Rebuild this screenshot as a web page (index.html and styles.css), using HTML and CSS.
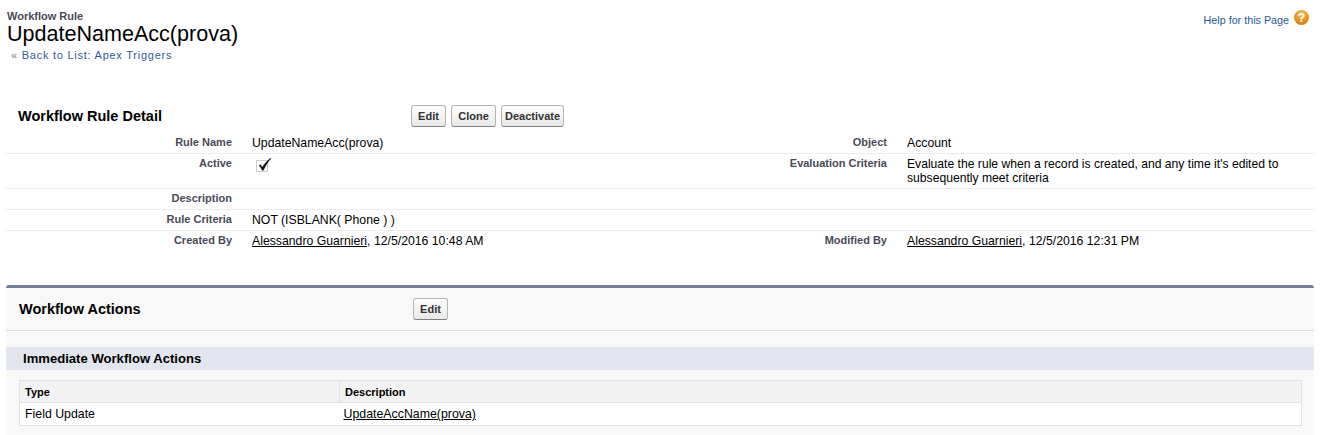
FILE: index.html
```html
<!DOCTYPE html>
<html lang="en">
<head>
<meta charset="utf-8">
<title>Workflow Rule</title>
<link rel="stylesheet" href="styles.css">
</head>
<body>
<header class="page-head">
  <div class="head-left">
    <div class="eyebrow">Workflow Rule</div>
    <h1 class="title">UpdateNameAcc(prova)</h1>
    <div class="back"><span class="back-mark">«</span> <a href="#">Back to List: Apex Triggers</a></div>
  </div>
  <a class="help" href="#">
    <span class="help-text">Help for this Page</span>
    <svg class="help-icon" width="15" height="15" viewBox="0 0 15 15" aria-hidden="true">
      <defs><radialGradient id="hg" cx="50%" cy="30%" r="70%"><stop offset="0" stop-color="#f6c25a"/><stop offset="1" stop-color="#d67c0c"/></radialGradient></defs>
      <circle cx="7.500" cy="7.500" r="7.500" fill="url(#hg)"/>
      <text x="7.500" y="11.500" text-anchor="middle" class="help-q">?</text>
    </svg>
  </a>
</header>

<section class="detail">
  <div class="detail-head">
    <h2 class="detail-title">Workflow Rule Detail</h2>
    <div class="btns">
      <button class="btn">Edit</button>
      <button class="btn">Clone</button>
      <button class="btn">Deactivate</button>
    </div>
  </div>
  <div class="row row-first">
    <div class="lab">Rule Name</div><div class="val">UpdateNameAcc(prova)</div>
    <div class="lab">Object</div><div class="val">Account</div>
  </div>
  <div class="row row-active">
    <div class="lab">Active</div>
    <div class="val"><svg class="check" width="16" height="15" viewBox="0 0 16 15" aria-hidden="true"><rect x="0.5" y="3.500" width="11" height="11" fill="none" stroke="#9a9a9a" stroke-dasharray="1 1"/><path d="M2.800 8.600L4.500 7.500 6.300 10C8.500 6.500 11 3.500 14.500 1L15 1.700C12 5 9.500 9 7.500 13.500H6C5.200 11.500 4.200 10 2.800 8.600z" fill="#111"/></svg></div>
    <div class="lab">Evaluation Criteria</div>
    <div class="val val-eval">Evaluate the rule when a record is created, and any time it's edited to<br>subsequently meet criteria</div>
  </div>
  <div class="row">
    <div class="lab">Description</div><div class="val"></div>
    <div class="lab"></div><div class="val"></div>
  </div>
  <div class="row">
    <div class="lab">Rule Criteria</div><div class="val">NOT (ISBLANK( Phone ) )</div>
    <div class="lab"></div><div class="val"></div>
  </div>
  <div class="row row-last">
    <div class="lab">Created By</div><div class="val"><a href="#">Alessandro Guarnieri</a>, 12/5/2016 10:48 AM</div>
    <div class="lab">Modified By</div><div class="val"><a href="#">Alessandro Guarnieri</a>, 12/5/2016 12:31 PM</div>
  </div>
</section>

<section class="panel">
  <div class="panel-head">
    <h2 class="panel-title">Workflow Actions</h2>
    <button class="btn">Edit</button>
  </div>
  <h3 class="band">Immediate Workflow Actions</h3>
  <div class="list-wrap">
    <table class="list">
      <thead><tr><th class="col-type">Type</th><th>Description</th></tr></thead>
      <tbody><tr><td>Field Update</td><td class="td-link"><a href="#">UpdateAccName(prova)</a></td></tr></tbody>
    </table>
  </div>
</section>
</body>
</html>
```

FILE: styles.css
```css
* { box-sizing: border-box; }
html, body { margin: 0; padding: 0; }
body {
  width: 1322px;
  height: 435px;
  overflow: hidden;
  background: #fff;
  color: #000;
  font-family: "Liberation Sans", Arial, sans-serif;
  font-size: 12.25px;
}
a { color: inherit; }
h1, h2, h3 { margin: 0; }

.page-head {
  display: flex;
  justify-content: space-between;
  align-items: flex-start;
  height: 104px;
  padding: 10px 13px 0 7px;
}
.eyebrow { font-size: 11px; font-weight: bold; line-height: 13px; color: #4a4a56; }
.title { font-size: 21.55px; font-weight: normal; line-height: 22px; color: #000; }
.back { margin: 3px 0 0 4px; font-size: 11px; line-height: 14px; letter-spacing: 0.75px; }
.back a { color: #2f5c94; text-decoration: none; }
.back-mark { color: #5f7ba0; }
.help { display: flex; align-items: flex-start; gap: 5px; font-size: 10.75px; color: #1f5a98; text-decoration: none; }
.help-text { margin-top: 4px; line-height: 12px; }
.help-icon { display: block; }
.help-q { font: bold 12px "Liberation Sans", sans-serif; fill: #fff; }

.detail { margin: 0 7px 0 6px; }
.detail-head { display: flex; align-items: center; height: 23px; margin-bottom: 3px; padding-left: 12px; }
.detail-title { width: 393px; font-size: 14.5px; font-weight: bold; color: #000; }
.btns { display: flex; gap: 5px; }
.btn {
  height: 22px;
  padding: 0 3px;
  min-width: 35px;
  border: 1px solid #b5b5b5;
  border-bottom-color: #7f7f7f;
  border-radius: 3px;
  background: linear-gradient(#fdfdfd, #e9e9e9);
  color: #333;
  font: bold 11px "Liberation Sans", Arial, sans-serif;
}
.btns .btn:nth-child(2) { width: 45px; }
.btns .btn:nth-child(3) { width: 63px; }

.row {
  display: grid;
  grid-template-columns: 226px 20px 635px 20px 1fr;
  min-height: 21px;
  padding-top: 3px;
  border-bottom: 1px solid #ececec;
  line-height: 14px;
}
.row .lab:nth-child(1) { grid-column: 1; }
.row .val:nth-child(2) { grid-column: 3; grid-row: 1; }
.row .lab:nth-child(3) { grid-column: 3; grid-row: 1; justify-self: end; }
.row .val:nth-child(4) { grid-column: 5; }
.row-first { min-height: 24px; padding-top: 5px; }
.row-first .val { margin-top: 1px; }
.row-active { min-height: 35px; }
.row-last { border-bottom: 0; }
.lab { margin-top: -1px; font-size: 11px; font-weight: bold; color: #4a4a56; text-align: right; }
.row-first .lab { margin-top: 0; }
.val { color: #000; }
.val-eval { font-size: 12.15px; }
.check { display: block; margin-left: 4px; }

.panel {
  margin: 33px 8px 0 6px;
  height: 150px;
  border-top: 3px solid #747e96;
  border-radius: 3px 3px 0 0;
  background: #f8f8f8;
}
.panel-head {
  display: flex;
  align-items: center;
  height: 43px;
  padding-left: 13px;
  border-bottom: 1px solid #dbdbdb;
}
.panel-title { width: 394px; font-size: 14.5px; font-weight: bold; color: #000; }
.band {
  height: 23px;
  margin-top: 16px;
  padding: 0 0 0 17px;
  background: #e3e6ee;
  font-size: 13.1px;
  font-weight: bold;
  line-height: 23px;
  color: #000;
}
.list-wrap { padding: 10px 12px 0 13px; }
.list {
  width: 100%;
  border-collapse: collapse;
  background: #fff;
  border: 1px solid #e0e3e5;
  table-layout: fixed;
}
.list th {
  height: 22px;
  padding: 0 5px;
  background: #f2f2f2;
  border-bottom: 1px solid #e0e3e5;
  border-left: 1px solid #e0e3e5;
  font-size: 11px;
  font-weight: bold;
  text-align: left;
  color: #000;
}
.list th:first-child { border-left: 0; }
.list td { height: 23px; padding: 0 5px; font-size: 12.35px; color: #000; }
.list .td-link { padding-left: 4px; }
.col-type { width: 320px; }
```
